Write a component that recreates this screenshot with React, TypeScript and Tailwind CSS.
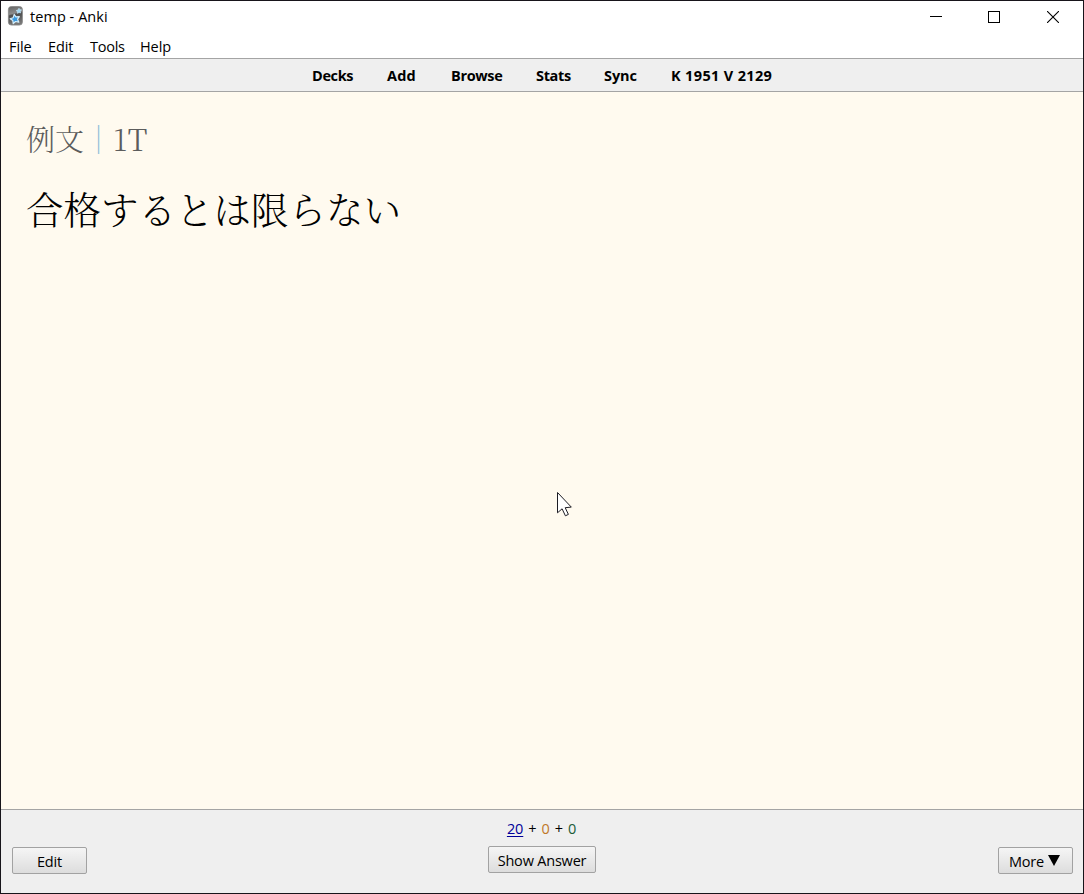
import React from 'react';

const ui = "font-['Open_Sans','Noto_Sans',sans-serif]";
const button =
  'flex h-[27px] items-center justify-center rounded-[2px] border border-[#a2a2a2] bg-linear-to-b from-[#f5f5f5] to-[#dddddd] pt-[3px] text-[14.5px] leading-none tracking-[-0.2px] text-black whitespace-nowrap';

function AppIcon() {
  return (
    <svg width="16" height="20" viewBox="0 0 16 20" className="block">
      <defs>
        <linearGradient id="card" x1="0" y1="0" x2="0.2" y2="1">
          <stop offset="0" stopColor="#626262" />
          <stop offset="0.42" stopColor="#8c8c8c" />
          <stop offset="0.5" stopColor="#4c4c4c" />
          <stop offset="1" stopColor="#777777" />
        </linearGradient>
      </defs>
      <rect x="1.4" y="0.5" width="14" height="18.6" rx="3" fill="url(#card)" stroke="#858585" strokeWidth="0.8" />
      <path d="M7.2 8.4l1.7 2.4 3.4-.2-1.7 2.6 1.2 3-3.2-.7-2.4 2-.4-3-2.6-1.8 3-1z" fill="#3d9be0" stroke="#d5eefb" strokeWidth="1.2" strokeLinejoin="round" />
      <path d="M12 2.2l.7 1.5 1.8.1-1.2 1.5.4 1.7-1.7-.5-1.5.9v-1.7l-1.3-1.1 1.7-.5z" fill="#9fd8f5" stroke="#c9eafa" strokeWidth="0.6" />
    </svg>
  );
}

function Titlebar() {
  return (
    <header className="flex h-[33px] shrink-0 items-start justify-between">
      <div className="flex items-start pl-[6px] pt-[5px]">
        <AppIcon />
        <span className="ml-[7px] pt-px text-[14.5px] leading-5 tracking-[0.05px]">temp - Anki</span>
      </div>
      <div className="flex pt-[10px] pr-[24px]">
        <svg width="12" height="12" shapeRendering="crispEdges"><path d="M0 5.5h12" stroke="#000" /></svg>
        <svg width="12" height="12" className="ml-[46px]" shapeRendering="crispEdges"><rect x=".5" y=".5" width="11" height="11" fill="none" stroke="#000" /></svg>
        <svg width="12" height="12" className="ml-[47px]"><path d="M0 0l12 12M12 0L0 12" stroke="#000" strokeWidth="1.1" /></svg>
      </div>
    </header>
  );
}

export default function App() {
  return (
    <div className={`flex h-[894px] w-[1084px] flex-col overflow-hidden border border-[#17141a] bg-white text-black ${ui}`}>
      <Titlebar />
      <nav className="flex h-[24px] shrink-0 pl-[8px] pt-px text-[14.5px] leading-[24px] tracking-[-0.1px]">
        <span className="w-[39px]">File</span>
        <span className="w-[42px]">Edit</span>
        <span className="w-[50px] tracking-[-0.25px]">Tools</span>
        <span>Help</span>
      </nav>
      <nav className="flex h-[34px] shrink-0 border-y border-[#a4a4a4] bg-[#efefef] pl-[311px] text-[14.5px] leading-[33px] font-bold whitespace-nowrap tracking-[-0.35px]">
        <span className="w-[75px]">Decks</span>
        <span className="w-[64px] tracking-[0.2px]">Add</span>
        <span className="w-[85px]">Browse</span>
        <span className="w-[68px]">Stats</span>
        <span className="w-[67px] tracking-[-0.1px]">Sync</span>
        <span className="tracking-[0.35px]">K 1951 V 2129</span>
      </nav>
      <main className="relative min-h-0 flex-1 bg-[#fffaef] pl-[25px] pt-[24px] font-['Noto_Serif_CJK_JP','Noto_Sans_CJK_JP',serif]" lang="ja">
        <p className="h-[44px] text-[29px] leading-[44px] font-light text-[#5c5c5c] whitespace-nowrap">
          例文<span className="text-[#8fc0d8]">｜</span><span className="text-[30px] tracking-[0.6px]">1T</span>
        </p>
        <h1 className="mt-[20px] h-[56px] text-[37.5px] leading-[56px] font-light whitespace-nowrap">合格するとは限らない</h1>
        <svg className="absolute left-[556px] top-[400px]" width="16" height="25" viewBox="0 0 16 25">
          <path d="M.5 .5v20.3l4.6-4 3.3 7 3-1.4-3.2-6.7 6.1-.6z" fill="#fff" stroke="#1c1c24" />
        </svg>
      </main>
      <footer className="flex h-[84px] shrink-0 flex-col border-t border-[#a4a4a4] bg-[#efefef] pl-[11px] pr-[10px] pt-[8px]">
        <div className="mr-[2px] flex h-[21px] items-center justify-center gap-[5px] text-[14.5px] leading-[21px] tracking-[-0.1px]">
          <span className="text-[#000099] underline underline-offset-2">20</span>
          <span>+</span>
          <span className="text-[#c07828]">0</span>
          <span>+</span>
          <span className="text-[#205c38]">0</span>
        </div>
        <div className="mt-[7px] grid grid-cols-[75px_108px_75px] items-start justify-start gap-x-[401px]">
          <button className={`${button} mt-px w-[75px]`}>Edit</button>
          <button className={`${button} w-[108px]`}>Show Answer</button>
          <button className={`${button} ml-px mt-px w-[75px] gap-[4px] pr-[2px]`}>
            More
            <svg width="12" height="11" className="-mt-[3px]"><path d="M0 0h12L6 11z" /></svg>
          </button>
        </div>
      </footer>
    </div>
  );
}
